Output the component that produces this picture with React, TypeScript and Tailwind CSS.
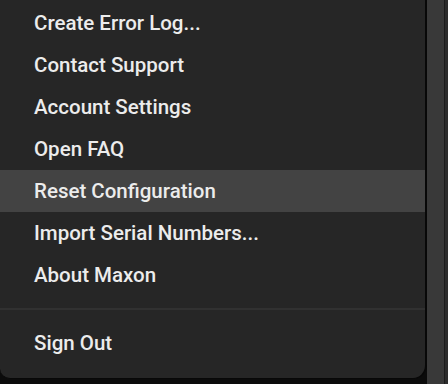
const items = [
  "Create Error Log...",
  "Contact Support",
  "Account Settings",
  "Open FAQ",
  "Reset Configuration",
  "Import Serial Numbers...",
  "About Maxon",
];

function MenuItem({ label, active }: { label: string; active?: boolean }) {
  return (
    <div
      className={
        "flex h-[42px] items-center pl-[34px] text-[20.5px] font-medium text-[#ececec] " +
        (active ? "bg-[#434343]" : "")
      }
    >
      {label}
    </div>
  );
}

export default function App() {
  return (
    <div
      className="flex h-[384px] w-[448px] overflow-hidden bg-[#0b0b0b]"
      style={{ fontFamily: "Roboto, 'Liberation Sans', sans-serif" }}
    >
      <div className="flex w-[427px] flex-col">
        <div className="w-[427px] rounded-br-[14px] rounded-bl-[10px] border-r-2 border-b border-[#080808] bg-[#262626] pt-[2px] pb-[14px]">
          {items.map((label) => (
            <MenuItem key={label} label={label} active={label === "Reset Configuration"} />
          ))}
          <div className="mt-[12px] mb-[12px] h-[2px] bg-[#313131]" />
          <MenuItem label="Sign Out" />
        </div>
      </div>
      <div className="h-full w-[17px] bg-[#393939]" />
      <div className="h-full w-[1px] bg-[#1c1c1c]" />
      <div className="h-full w-[3px] bg-[#2c2c2c]" />
    </div>
  );
}
